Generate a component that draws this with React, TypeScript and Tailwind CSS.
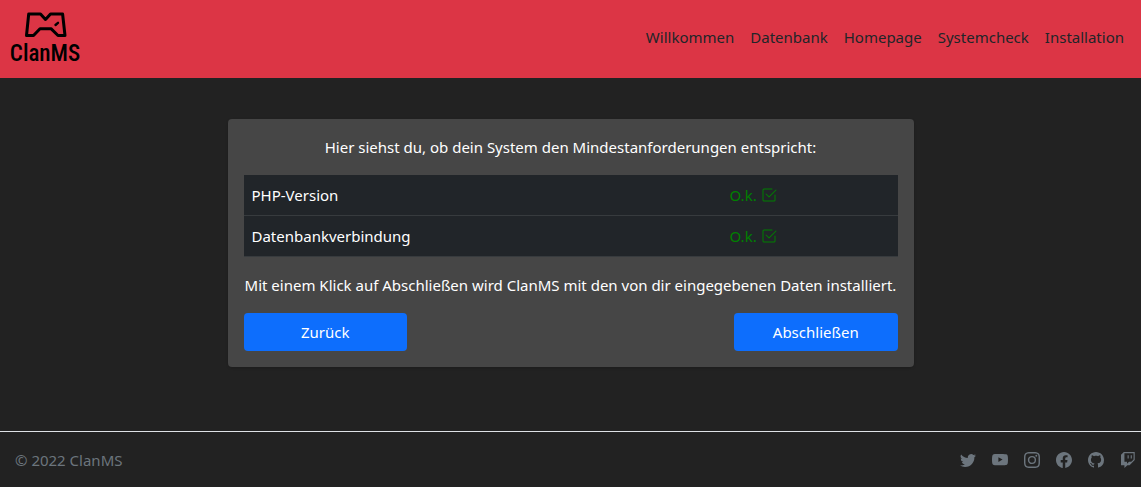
import { BsCheck2Square, BsFacebook, BsGithub, BsInstagram, BsTwitch, BsTwitter, BsYoutube } from "react-icons/bs";

const navItems = ["Willkommen", "Datenbank", "Homepage", "Systemcheck", "Installation"];
const checks = ["PHP-Version", "Datenbankverbindung"];
const socials = [
  { label: "Twitter", Icon: BsTwitter },
  { label: "YouTube", Icon: BsYoutube },
  { label: "Instagram", Icon: BsInstagram },
  { label: "Facebook", Icon: BsFacebook },
  { label: "GitHub", Icon: BsGithub },
  { label: "Twitch", Icon: BsTwitch },
];

function Logo() {
  return (
    <svg width="72" height="60" viewBox="0 0 72 60" role="img" aria-label="ClanMS">
      <path
        d="M19.7 6H31.5L36.5 11.5L41.5 6H53.6L56 27.5H49L42 20.7H31L24.5 27.5H17.5Z"
        fill="none"
        stroke="#000"
        strokeWidth="3"
        strokeLinejoin="round"
      />
      <path d="M46.5 17L49 14.8" stroke="#000" strokeWidth="2.4" strokeLinecap="round" />
      <text
        x="36"
        y="53"
        textAnchor="middle"
        className="font-['Roboto_Condensed','Liberation_Sans_Narrow',sans-serif] text-[23px] font-medium"
      >
        ClanMS
      </text>
    </svg>
  );
}

export default function App() {
  return (
    <div className="flex min-h-screen flex-col bg-[#222222] font-['Noto_Sans',sans-serif] text-[15px] leading-6 text-white">
      <header className="flex items-start justify-between bg-[#dc3545] px-[9px] pt-2 pb-[10px]">
        <a href="#" className="block">
          <Logo />
        </a>
        <nav className="flex pt-[13px] text-[#212529]">
          {navItems.map((item) => (
            <a key={item} href="#" className="px-2 py-1">
              {item}
            </a>
          ))}
        </nav>
      </header>

      <main className="flex grow justify-center pt-[41px] pb-16">
        <section className="w-[686px] max-w-full self-start rounded bg-[#464646] p-4 shadow-sm">
          <p className="mb-4 text-center">Hier siehst du, ob dein System den Mindestanforderungen entspricht:</p>
          <table className="mb-4 w-full border-collapse bg-[#212529]">
            <tbody>
              {checks.map((check) => (
                <tr key={check} className="border-b border-[#373b3e]">
                  <td className="p-2">{check}</td>
                  <td className="w-[176px] p-2 text-[#008000]">
                    O.k. <BsCheck2Square className="inline size-4 align-[-2px]" />
                  </td>
                </tr>
              ))}
            </tbody>
          </table>
          <p className="mb-4 text-center">
            Mit einem Klick auf Abschließen wird ClanMS mit den von dir eingegebenen Daten installiert.
          </p>
          <div className="flex justify-between">
            <button type="button" className="w-1/4 rounded bg-[#0d6efd] py-[7px]">
              Zurück
            </button>
            <button type="button" className="w-1/4 rounded bg-[#0d6efd] py-[7px]">
              Abschließen
            </button>
          </div>
        </section>
      </main>

      <footer className="flex items-center justify-between border-t border-[#dee2e6] pt-4 pr-[5px] pb-[15px] pl-[15px] text-[#6c757d]">
        <span>© 2022 ClanMS</span>
        <ul className="flex gap-4">
          {socials.map(({ label, Icon }) => (
            <li key={label}>
              <a href="#" aria-label={label} className="block">
                <Icon className="size-4" />
              </a>
            </li>
          ))}
        </ul>
      </footer>
    </div>
  );
}
